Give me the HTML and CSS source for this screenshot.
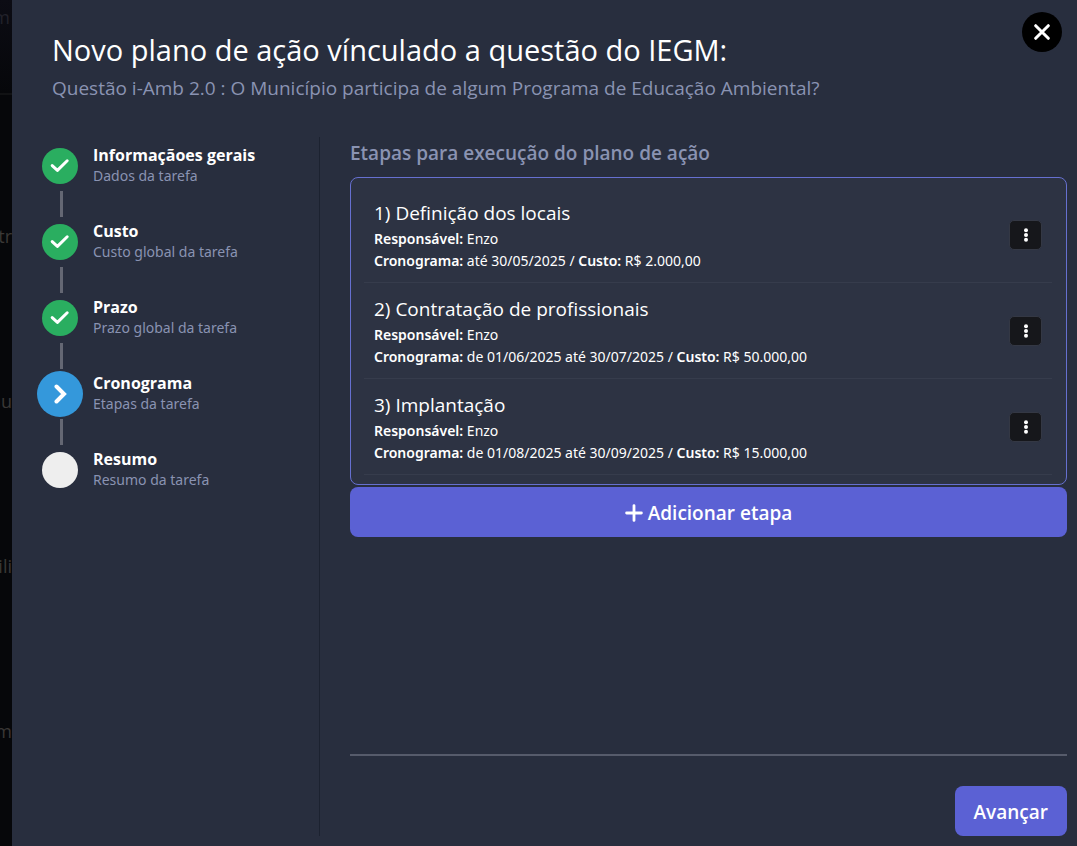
FILE: index.html
```html
<!DOCTYPE html>
<html lang="pt-BR">
<head>
<meta charset="utf-8">
<meta name="viewport" content="width=device-width, initial-scale=1">
<title>Novo plano de ação</title>
<link rel="stylesheet" href="styles.css">
</head>
<body>
<div class="page">
  <div class="underlay" aria-hidden="true">
    <div class="underlay-top">m</div>
    <div class="underlay-row">str</div>
    <div class="underlay-row">nu</div>
    <div class="underlay-row">ili</div>
    <div class="underlay-row">im</div>
  </div>
  <main class="drawer">
    <button class="close" type="button" aria-label="Fechar">
      <svg width="16" height="16" viewBox="0 0 16 16" fill="none" stroke="#fff" stroke-width="3" stroke-linecap="round"><path d="M1.7 1.7 14.3 14.3M14.3 1.7 1.7 14.3"/></svg>
    </button>
    <header class="header">
      <h1 class="title">Novo plano de ação vínculado a questão do IEGM:</h1>
      <p class="subtitle">Questão i-Amb 2.0 : O Município participa de algum Programa de Educação Ambiental?</p>
    </header>
    <div class="content">
      <ol class="stepper">
        <li class="step">
          <div class="track"><span class="dot done"><svg width="20" height="16" viewBox="0 0 20 16"><path d="M2.2 7.6 7.4 12.4 17.2 2.8"/></svg></span></div>
          <div class="step-text"><div class="step-name">Informaçãoes gerais</div><div class="step-note">Dados da tarefa</div></div>
        </li>
        <li class="step">
          <div class="track"><span class="dot done"><svg width="20" height="16" viewBox="0 0 20 16"><path d="M2.2 7.6 7.4 12.4 17.2 2.8"/></svg></span></div>
          <div class="step-text"><div class="step-name">Custo</div><div class="step-note">Custo global da tarefa</div></div>
        </li>
        <li class="step">
          <div class="track"><span class="dot done"><svg width="20" height="16" viewBox="0 0 20 16"><path d="M2.2 7.6 7.4 12.4 17.2 2.8"/></svg></span></div>
          <div class="step-text"><div class="step-name">Prazo</div><div class="step-note">Prazo global da tarefa</div></div>
        </li>
        <li class="step" aria-current="step">
          <div class="track"><span class="dot current"><svg width="14" height="20" viewBox="0 0 14 20"><path d="M3.5 2.5 11 10 3.5 17.5"/></svg></span></div>
          <div class="step-text"><div class="step-name">Cronograma</div><div class="step-note">Etapas da tarefa</div></div>
        </li>
        <li class="step">
          <div class="track"><span class="dot"></span></div>
          <div class="step-text"><div class="step-name">Resumo</div><div class="step-note">Resumo da tarefa</div></div>
        </li>
      </ol>
      <section class="panel">
        <h2 class="panel-title">Etapas para execução do plano de ação</h2>
        <ul class="list">
          <li class="item">
            <div class="item-text">
              <h3 class="item-title">1) Definição dos locais</h3>
              <p class="line"><b>Responsável:</b> Enzo</p>
              <p class="line"><b>Cronograma:</b> até 30/05/2025 / <b>Custo:</b> R$ 2.000,00</p>
            </div>
            <button class="more" type="button" aria-label="Opções da etapa 1"><svg width="4" height="14" viewBox="0 0 4 14"><circle cx="2" cy="2.3" r="2"/><circle cx="2" cy="7" r="2"/><circle cx="2" cy="11.7" r="2"/></svg></button>
          </li>
          <li class="item">
            <div class="item-text">
              <h3 class="item-title">2) Contratação de profissionais</h3>
              <p class="line"><b>Responsável:</b> Enzo</p>
              <p class="line"><b>Cronograma:</b> de 01/06/2025 até 30/07/2025 / <b>Custo:</b> R$ 50.000,00</p>
            </div>
            <button class="more" type="button" aria-label="Opções da etapa 2"><svg width="4" height="14" viewBox="0 0 4 14"><circle cx="2" cy="2.3" r="2"/><circle cx="2" cy="7" r="2"/><circle cx="2" cy="11.7" r="2"/></svg></button>
          </li>
          <li class="item">
            <div class="item-text">
              <h3 class="item-title">3) Implantação</h3>
              <p class="line"><b>Responsável:</b> Enzo</p>
              <p class="line"><b>Cronograma:</b> de 01/08/2025 até 30/09/2025 / <b>Custo:</b> R$ 15.000,00</p>
            </div>
            <button class="more" type="button" aria-label="Opções da etapa 3"><svg width="4" height="14" viewBox="0 0 4 14"><circle cx="2" cy="2.3" r="2"/><circle cx="2" cy="7" r="2"/><circle cx="2" cy="11.7" r="2"/></svg></button>
          </li>
        </ul>
        <button class="primary add" type="button">
          <svg width="18" height="18" viewBox="0 0 18 18" fill="none" stroke="#fff" stroke-width="2.8" stroke-linecap="round"><path d="M9 1.6V16.4M1.6 9H16.4"/></svg>
          Adicionar etapa
        </button>
        <footer class="footer">
          <button class="primary" type="button">Avançar</button>
        </footer>
      </section>
    </div>
  </main>
</div>
</body>
</html>
```
FILE: styles.css
```css
* {
  box-sizing: border-box;
}

body {
  margin: 0;
  background: #06070a;
  color: #fff;
  font-family: "Segoe UI", "Open Sans", "Noto Sans", sans-serif;
}

h1, h2, h3, p, ul, ol {
  margin: 0;
  padding: 0;
  list-style: none;
}

button {
  border: 0;
  padding: 0;
  color: #fff;
  font-family: inherit;
  cursor: pointer;
}

.page {
  display: grid;
  grid-template-columns: 12px minmax(0, 1fr);
  min-height: 100vh;
}

/* Sliver of the dimmed page left of the drawer */
.underlay {
  display: flex;
  flex-direction: column;
  align-items: flex-end;
  overflow: hidden;
  color: #3a3836;
  font-size: 18px;
  line-height: 26px;
}

.underlay-top {
  align-self: stretch;
  height: 95px;
  padding: 4px 2px 0 0;
  border-bottom: 2px solid #111214;
  background: linear-gradient(#0c0c14, #06070a);
  color: #22222b;
  direction: rtl;
}

.underlay-row {
  margin-bottom: 139px;
}

.underlay-top + .underlay-row {
  margin-top: 128px;
}

.underlay-row:last-child {
  margin-bottom: 0;
}

.drawer {
  position: relative;
  display: flex;
  flex-direction: column;
  padding: 31px 10px 10px 25px;
  background: #282e3e;
}

.close {
  position: absolute;
  top: 12px;
  right: 15px;
  display: grid;
  place-items: center;
  width: 40px;
  height: 40px;
  border-radius: 50%;
  background: #000;
}

.header {
  padding: 0 60px 35px 15px;
}

.title {
  font-size: 29px;
  font-weight: 400;
  line-height: 38px;
}

.subtitle {
  margin-top: 5px;
  color: #8a93b2;
  font-size: 19px;
  line-height: 28px;
}

.content {
  flex: 1;
  display: grid;
  grid-template-columns: 283px minmax(0, 1fr);
}

.stepper {
  padding-top: 6px;
  border-right: 1px solid #1c2230;
}

.step {
  display: grid;
  grid-template-columns: 46px minmax(0, 1fr);
  column-gap: 10px;
}

.track {
  display: grid;
  grid-template-rows: 46px;
  justify-items: center;
  align-items: center;
}

.dot {
  display: grid;
  place-items: center;
  width: 36px;
  height: 36px;
  border-radius: 50%;
  background: #eee;
}

.dot svg {
  fill: none;
  stroke: #fff;
  stroke-width: 3;
  stroke-linecap: round;
  stroke-linejoin: round;
}

.dot.done {
  background: #2aae60;
}

.dot.current {
  width: 46px;
  height: 46px;
  background: #3498db;
}

.dot.current svg {
  stroke-width: 4;
  stroke-linejoin: miter;
}

.step:not(:last-child) .track::after {
  content: "";
  width: 3px;
  height: 26px;
  margin: 2px 0 2px 3px;
  background: #646773;
}

.step-text {
  padding-top: 2px;
}

.step-name {
  font-size: 16px;
  font-weight: 700;
  line-height: 21px;
}

.step-note {
  color: #8a93b2;
  font-family: "Segoe UI", "Noto Sans", sans-serif;
  font-size: 14px;
  line-height: 20px;
}

.panel {
  display: flex;
  flex-direction: column;
  padding-left: 30px;
}

.panel-title {
  margin-bottom: 8px;
  color: #8a93b2;
  font-size: 19px;
  font-weight: 600;
  line-height: 32px;
}

.list {
  padding: 9px 14px 9px 13px;
  border: 1px solid #6670d0;
  border-radius: 8px;
  background: #2d3343;
}

.item {
  display: flex;
  align-items: center;
  justify-content: space-between;
  gap: 10px;
  min-height: 96px;
  padding: 0 10px;
  border-bottom: 1px solid #363c4c;
}

.item-title {
  font-size: 19px;
  font-weight: 400;
  line-height: 30px;
}

.line {
  font-family: "Segoe UI", "Noto Sans", sans-serif;
  font-size: 14px;
  line-height: 22px;
}

.line b {
  font-weight: 600;
}

.more {
  display: grid;
  place-items: center;
  flex: none;
  width: 33px;
  height: 30px;
  border: 1px solid #343844;
  border-radius: 5px;
  background: #16171b;
  fill: #fff;
}

.primary {
  height: 50px;
  padding: 2px 19px 0;
  border-radius: 8px;
  background: #5b61d4;
  font-size: 19px;
  font-weight: 600;
}

.add {
  display: flex;
  align-items: center;
  justify-content: center;
  gap: 5px;
  margin-top: 2px;
}

.footer {
  display: flex;
  justify-content: flex-end;
  margin-top: auto;
  padding-top: 30px;
  border-top: 2px solid #565b6b;
}
```
